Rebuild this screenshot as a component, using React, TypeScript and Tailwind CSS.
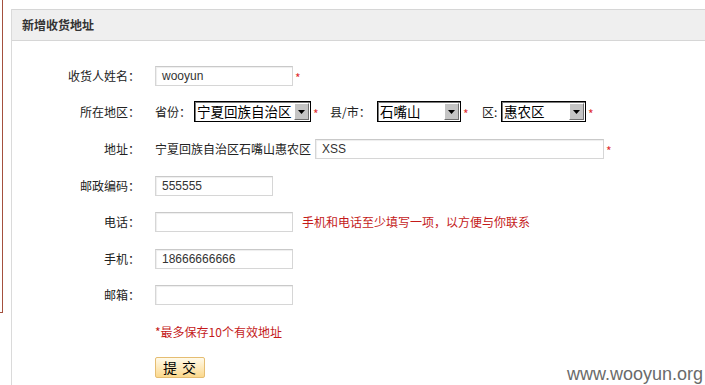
const cjk = "font-['SimSun','Noto_Sans_CJK_SC',sans-serif]";

const Star = () => (
  <span className="self-start pt-[1px] text-[12px] leading-[12px] text-[#e03030]">*</span>
);

const TextBox = ({ value, width }: { value?: string; width: string }) => (
  <div
    className={`${width} h-[20px] border border-[#d6d6d6] border-t-[#c9c9c9] bg-white pl-[6px] text-[12px] leading-[18px] text-[#333] font-['Liberation_Sans',Arial,sans-serif] shadow-[inset_1px_1px_1px_#eeeeee]`}
  >
    {value}
  </div>
);

const SelectBox = ({ value, width }: { value: string; width: string }) => (
  <div
    className={`${width} h-[21px] flex border border-black bg-white shadow-[inset_1px_1px_0_#7a7a7a]`}
  >
    <span className="flex-1 overflow-hidden whitespace-nowrap pl-[2px] text-[13.5px] leading-[19px] text-black font-['Noto_Sans_CJK_SC',sans-serif]">
      {value}
    </span>
    <span className="w-[15px] h-[17px] shrink-0 mt-[1px] mr-[1px] flex items-center justify-center bg-[#c4c4c4] border border-t-white border-l-white border-r-[#6f6f6f] border-b-[#6f6f6f]">
      <svg width="7" height="4" viewBox="0 0 7 4">
        <path d="M0 0h7L3.5 4z" fill="#000" />
      </svg>
    </span>
  </div>
);

const Row = ({
  label,
  children,
  mt,
}: {
  label?: string;
  children: React.ReactNode;
  mt: string;
}) => (
  <div className={`flex items-center h-[21px] ${mt}`}>
    <span className="w-[128px] shrink-0 text-right text-[12px] text-[#222]">{label}</span>
    <div className="ml-[15px] flex items-center">{children}</div>
  </div>
);

export default function App() {
  return (
    <div
      className={`relative w-[705px] h-[385px] overflow-hidden bg-white flex ${cjk} font-['Noto_Sans_CJK_SC',sans-serif]`}
    >
      <div className="w-[3px] h-[313px] shrink-0 border-r border-b border-[#a4503e]" />

      <div className="ml-[8px] mt-[9px] flex-1 border-l border-[#dadada]">
        <div className="h-[32px] flex items-center pl-[10px] bg-[#efefef] border-t border-b border-[#d6d6d6]">
          <h3 className="text-[12px] font-bold text-[#333]">新增收货地址</h3>
        </div>

        <Row label="收货人姓名：" mt="mt-[24px]">
          <TextBox value="wooyun" width="w-[138px]" />
          <span className="ml-[2px]"><Star /></span>
        </Row>

        <Row label="所在地区：" mt="mt-[15px]">
          <span className="w-[39px] text-[12px] text-[#222]">省份：</span>
          <SelectBox value="宁夏回族自治区" width="w-[117px]" />
          <span className="w-[19px] pl-[2px] self-start"><Star /></span>
          <span className="w-[47px] text-[12px] text-[#222]">县/市：</span>
          <SelectBox value="石嘴山" width="w-[84px]" />
          <span className="w-[21px] pl-[2px] self-start"><Star /></span>
          <span className="w-[19px] text-[12px] text-[#222]">区:</span>
          <SelectBox value="惠农区" width="w-[85px]" />
          <span className="pl-[2px] self-start"><Star /></span>
        </Row>

        <Row label="地址：" mt="mt-[16px]">
          <span className="w-[160px] text-[12px] text-[#222]">宁夏回族自治区石嘴山惠农区</span>
          <TextBox value="XSS" width="w-[289px]" />
          <span className="ml-[2px]"><Star /></span>
        </Row>

        <Row label="邮政编码：" mt="mt-[16px]">
          <TextBox value="555555" width="w-[118px]" />
        </Row>

        <Row label="电话：" mt="mt-[15px]">
          <TextBox width="w-[138px]" />
          <span className="ml-[9px] text-[12px] text-[#c41a1a]">
            手机和电话至少填写一项，以方便与你联系
          </span>
        </Row>

        <Row label="手机：" mt="mt-[16px]">
          <TextBox value="18666666666" width="w-[138px]" />
        </Row>

        <Row label="邮箱：" mt="mt-[15px]">
          <TextBox width="w-[138px]" />
        </Row>

        <Row mt="mt-[16px]">
          <span className="text-[12px] text-[#c41a1a]">*最多保存10个有效地址</span>
        </Row>

        <Row mt="mt-[15px]">
          <button className="w-[50px] h-[21px] rounded-[2px] border border-[#e5bd72] bg-gradient-to-b from-[#fffaea] to-[#fbd88c] text-[14px] leading-[19px] tracking-[1px] text-black">
            提 交
          </button>
        </Row>
      </div>

      <span className="absolute left-[567px] top-[364px] text-[18px] leading-[20px] text-[#6a6a6a] font-['Liberation_Sans',Arial,sans-serif]">
        www.wooyun.org
      </span>
    </div>
  );
}
